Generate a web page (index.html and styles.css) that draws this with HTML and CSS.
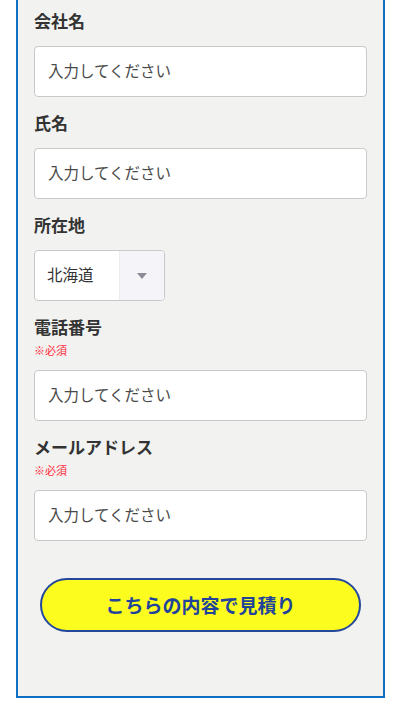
FILE: index.html
```html
<!DOCTYPE html>
<html lang="ja">
<head>
    <meta charset="UTF-8">
    <meta name="viewport" content="width=device-width, initial-scale=1.0">
    <title>お見積りフォーム</title>
    <link rel="stylesheet" href="styles.css">
</head>
<body>
    <form class="form-box">
        <div class="form-group">
            <label for="company">会社名</label>
            <input type="text" id="company" placeholder="入力してください">
        </div>
        <div class="form-group">
            <label for="name">氏名</label>
            <input type="text" id="name" placeholder="入力してください">
        </div>
        <div class="form-group">
            <label for="pref">所在地</label>
            <div class="select-box">
                <select id="pref">
                    <option>北海道</option>
                    <option>青森県</option>
                    <option>岩手県</option>
                    <option>宮城県</option>
                </select>
                <span class="select-arrow"></span>
            </div>
        </div>
        <div class="form-group">
            <label for="tel" class="has-note">電話番号</label>
            <p class="required">※必須</p>
            <input type="tel" id="tel" placeholder="入力してください">
        </div>
        <div class="form-group">
            <label for="mail" class="has-note">メールアドレス</label>
            <p class="required">※必須</p>
            <input type="email" id="mail" placeholder="入力してください">
        </div>
        <button type="submit" class="btn-submit">こちらの内容で見積り</button>
    </form>
</body>
</html>
```

FILE: styles.css
```css
body {
    margin: 0;
    font-family: "Noto Sans CJK JP", "Noto Sans", sans-serif;
    background-color: white;
    color: #333;
}
.form-box {
    margin: 0 15px 12px 16px;
    padding: 9px 16px 64px;
    background-color: #f2f2f0;
    border: 2px solid #0f6fc2;
    border-top: none;
}
.form-group {
    margin-bottom: 14px;
}
label {
    display: block;
    font-size: 17px;
    font-weight: bold;
    line-height: 24px;
    margin-bottom: 13px;
    color: #333;
}
label.has-note {
    margin-bottom: 4px;
}
.required {
    margin: 0 0 13px;
    font-size: 11px;
    line-height: 14px;
    color: #ff2b3a;
}
input {
    display: block;
    width: 100%;
    height: 51px;
    padding: 0 13px 3px;
    border: 1px solid #c9c9c9;
    border-radius: 4px;
    background-color: white;
    box-sizing: border-box;
    font-family: inherit;
    font-size: 15.5px;
    color: #333;
}
input::placeholder {
    color: #4a4a4a;
}
.select-box {
    display: flex;
    width: 131px;
    height: 51px;
    border: 1px solid #c9c9c9;
    border-radius: 4px;
    background-color: white;
    box-sizing: border-box;
    overflow: hidden;
}
.select-box select {
    flex: 1;
    min-width: 0;
    padding: 0 0 3px 12px;
    border: none;
    background: transparent;
    -webkit-appearance: none;
    appearance: none;
    font-family: inherit;
    font-size: 15.5px;
    color: #333;
}
.select-arrow {
    display: flex;
    align-items: center;
    justify-content: center;
    width: 44px;
    background-color: #f5f5f9;
    border-left: 1px solid #ececf0;
}
.select-arrow::after {
    content: "";
    border-left: 5px solid transparent;
    border-right: 5px solid transparent;
    border-top: 6px solid #8c8b98;
}
.btn-submit {
    display: block;
    width: 321px;
    height: 54px;
    margin: 37px auto 0;
    padding: 0 0 2px;
    background-color: #fcfc1f;
    border: 2px solid #22479b;
    border-radius: 27px;
    font-family: inherit;
    font-size: 19px;
    font-weight: bold;
    color: #22439a;
    cursor: pointer;
}
```
